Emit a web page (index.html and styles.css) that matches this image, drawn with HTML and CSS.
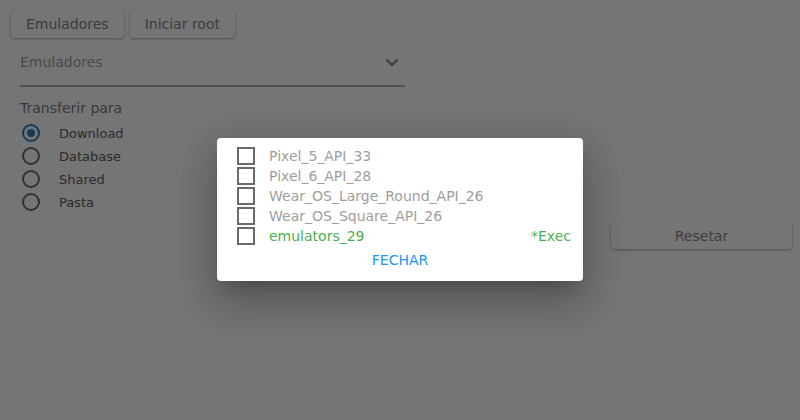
FILE: index.html
```html
<!DOCTYPE html>
<html>
<head>
<meta charset="utf-8">
<link rel="stylesheet" href="styles.css">
</head>
<body>
<div class="page">
  <div class="toolbar">
    <button class="btn">Emuladores</button>
    <button class="btn">Iniciar root</button>
  </div>
  <div class="select">
    <span class="select-text">Emuladores</span>
    <svg class="chev" width="14" height="9" viewBox="0 0 14 9"><path d="M1.5 1.5 L7 7 L12.5 1.5" fill="none" stroke="#8a8a8a" stroke-width="2.2"/></svg>
  </div>
  <div class="group-label">Transferir para</div>
  <div class="radios">
    <label class="radio"><span class="circle checked"><span class="dot"></span></span>Download</label>
    <label class="radio"><span class="circle"></span>Database</label>
    <label class="radio"><span class="circle"></span>Shared</label>
    <label class="radio"><span class="circle"></span>Pasta</label>
  </div>
  <div class="reset-row">
    <button class="btn wide">Resetar</button>
  </div>
</div>
<div class="overlay"></div>
<div class="dialog">
  <ul class="list">
    <li class="item"><span class="box"></span><span class="name">Pixel_5_API_33</span></li>
    <li class="item"><span class="box"></span><span class="name">Pixel_6_API_28</span></li>
    <li class="item"><span class="box"></span><span class="name">Wear_OS_Large_Round_API_26</span></li>
    <li class="item"><span class="box"></span><span class="name">Wear_OS_Square_API_26</span></li>
    <li class="item running"><span class="box"></span><span class="name">emulators_29</span><span class="status">*Exec</span></li>
  </ul>
  <div class="actions"><button class="close">FECHAR</button></div>
</div>
</body>
</html>
```
FILE: styles.css
```css
* { box-sizing: border-box; }
html, body { margin: 0; padding: 0; }
body {
  width: 800px;
  height: 420px;
  background: #ffffff;
  font-family: "DejaVu Sans", sans-serif;
  overflow: hidden;
  position: relative;
}
.page {
  padding: 10px 8px 0 11px;
}
.toolbar {
  display: flex;
  gap: 6px;
}
.btn {
  font-family: "DejaVu Sans", sans-serif;
  font-size: 14px;
  color: #848484;
  background: #ffffff;
  border: none;
  border-radius: 4px;
  height: 28px;
  padding: 0 15px;
  box-shadow: 0 1px 3px rgba(0,0,0,0.35);
}
.select {
  margin: 6px 0 0 9px;
  width: 385px;
  height: 43px;
  border-bottom: 2px solid #b4b4b4;
  display: flex;
  align-items: center;
  justify-content: space-between;
  padding: 0 6px 5px 0;
}
.select-text {
  font-size: 14px;
  color: #a2a2a2;
}
.chev { display: block; }
.group-label {
  margin: 13px 0 0 9px;
  font-size: 14px;
  color: #7e7e7e;
}
.radios {
  margin: 8px 0 0 11px;
  display: flex;
  flex-direction: column;
  gap: 5px;
}
.radio {
  display: flex;
  align-items: center;
  height: 18px;
  font-size: 13px;
  color: #5e5e5e;
}
.circle {
  width: 18px;
  height: 18px;
  border: 2px solid #6e6e6e;
  border-radius: 50%;
  margin-right: 19px;
  display: flex;
  align-items: center;
  justify-content: center;
}
.circle.checked { border-color: #2c80c6; }
.dot {
  width: 8px;
  height: 8px;
  border-radius: 50%;
  background: #2c80c6;
}
.reset-row {
  display: flex;
  justify-content: flex-end;
  margin-top: 11px;
}
.btn.wide {
  width: 181px;
  height: 27px;
  color: #8a8a8a;
}
.overlay {
  position: absolute;
  inset: 0;
  background: rgba(0,0,0,0.54);
}
.dialog {
  position: absolute;
  left: 217px;
  top: 138px;
  width: 366px;
  height: 143px;
  background: #ffffff;
  border-radius: 4px;
  box-shadow: 0 11px 15px -7px rgba(0,0,0,0.2), 0 24px 38px 3px rgba(0,0,0,0.14), 0 9px 46px 8px rgba(0,0,0,0.12);
  padding: 8px 12px 0 20px;
}
.list {
  list-style: none;
  margin: 0;
  padding: 0;
}
.item {
  display: flex;
  align-items: center;
  height: 20px;
  font-size: 14px;
  color: #9e9e9e;
}
.box {
  width: 18px;
  height: 18px;
  border: 2px solid #6a6a6a;
  margin-right: 14px;
  flex: none;
}
.name { flex: 1; }
.item.running { color: #4caf50; }
.status { color: #4caf50; }
.actions {
  display: flex;
  justify-content: center;
  margin-top: 2px;
  margin-left: -8px;
}
.close {
  font-family: "DejaVu Sans", sans-serif;
  font-size: 14px;
  color: #2196f3;
  background: none;
  border: none;
  padding: 4px 8px;
}
```
